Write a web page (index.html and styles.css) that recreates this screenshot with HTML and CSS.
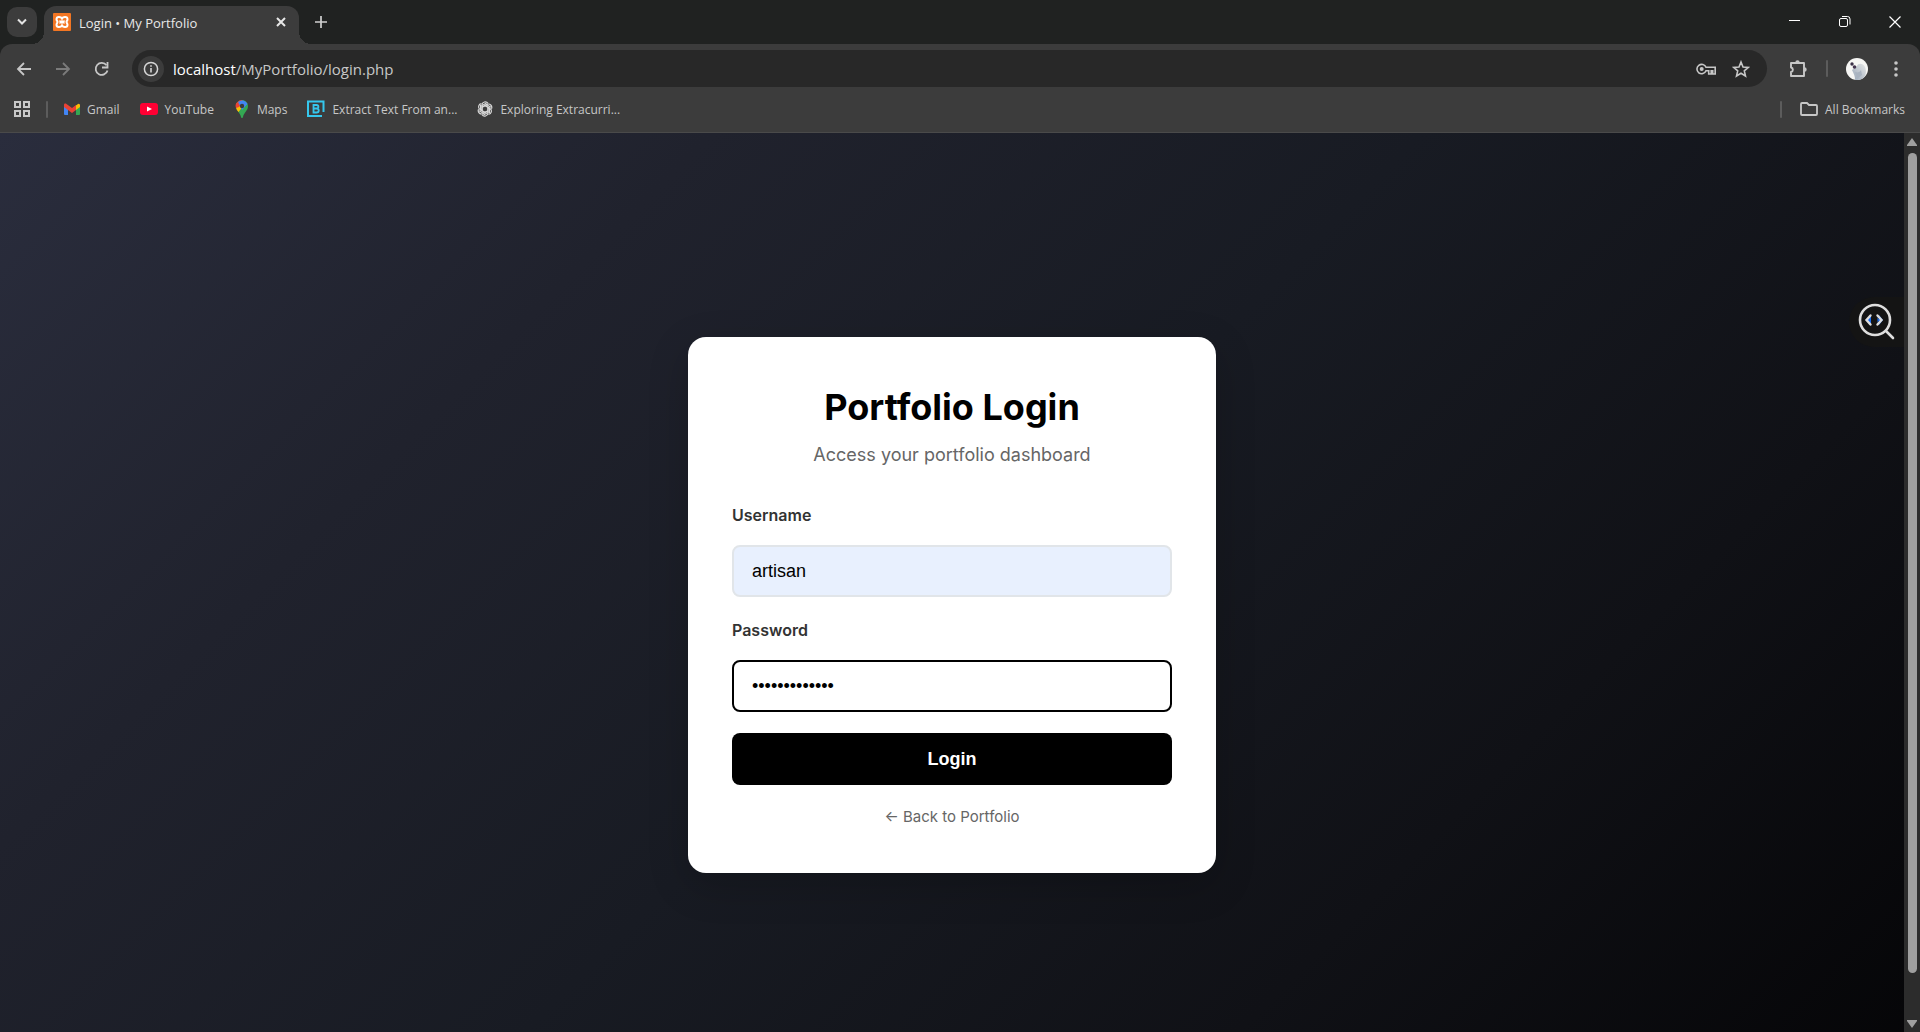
FILE: index.html
```html
<!DOCTYPE html>
<html lang="en">
<head>
<meta charset="utf-8">
<title>Login • My Portfolio</title>
<link rel="stylesheet" href="styles.css">
</head>
<body>
<header class="browser">
  <div class="tabstrip">
    <button class="tab-search" aria-label="Search tabs"><svg width="12" height="12" viewBox="0 0 12 12"><path d="M2 3.500 6 7.500 10 3.500" fill="none" stroke="#e3e3e3" stroke-width="2"/></svg></button>
    <div class="tab">
      <svg width="18" height="18" viewBox="0 0 18 18"><rect width="18" height="18" rx="1" fill="#f37623"/><path d="M9 5.500C8 3.500 3.500 3 3.500 6.200c0 1.500 1 1.800 1 2.800s-1 1.300-1 2.800C3.500 15 8 14.500 9 12.500c1 2 5.500 2.500 5.500-.7 0-1.500-1-1.800-1-2.800s1-1.300 1-2.800C14.500 3 10 3.500 9 5.500zM7 7.500C7 9 11 9 11 7.500M7 10.500C7 9 11 9 11 10.500" fill="none" stroke="#fff" stroke-width="2"/></svg>
      <span class="tab-title">Login • My Portfolio</span>
      <button class="icon-btn" aria-label="Close tab"><svg width="10" height="10" viewBox="0 0 10 10"><path d="m1 1 8 8M9 1 1 9" stroke="#e8e8e8" stroke-width="2"/></svg></button>
    </div>
    <button class="icon-btn new-tab" aria-label="New tab"><svg width="12" height="12" viewBox="0 0 12 12"><path d="M6 0v12M0 6h12" stroke="#d0d0d0" stroke-width="1.700"/></svg></button>
    <div class="window-controls">
      <button class="icon-btn" aria-label="Minimize"><svg width="12" height="12" viewBox="0 0 12 12"><path d="M0 4.500h11" stroke="#fff"/></svg></button>
      <button class="icon-btn" aria-label="Restore"><svg width="12" height="12" viewBox="0 0 12 12"><g fill="none" stroke="#fff"><rect x=".5" y="2.500" width="8" height="8" rx="1.500"/><path d="M3 .5h5.500a2.500 2.500 0 0 1 2.500 2.500v5.500"/></g></svg></button>
      <button class="icon-btn" aria-label="Close"><svg width="12" height="12" viewBox="0 0 12 12"><path d="m.5.5 11 11M11.500.5l-11 11" stroke="#fff" stroke-width="1.200"/></svg></button>
    </div>
  </div>
  <div class="toolbar">
    <nav class="nav-buttons">
      <button class="icon-btn" aria-label="Back"><svg width="16" height="16" viewBox="0 0 16 16"><path d="M15 8H2M8 2 2 8l6 6" fill="none" stroke="#c7c7c7" stroke-width="1.800"/></svg></button>
      <button class="icon-btn" aria-label="Forward"><svg width="16" height="16" viewBox="0 0 16 16"><path d="M1 8h13M8 2l6 6-6 6" fill="none" stroke="#7b7b7b" stroke-width="1.800"/></svg></button>
      <button class="icon-btn" aria-label="Reload"><svg width="16" height="16" viewBox="0 0 16 16"><path d="M12.500 4.300A6 6 0 1 0 13.500 9.500" fill="none" stroke="#c7c7c7" stroke-width="1.800"/><path d="M13.500 1v5.500H8" fill="none" stroke="#c7c7c7" stroke-width="1.800"/></svg></button>
    </nav>
    <div class="omnibox">
      <button class="site-info" aria-label="Site information"><svg width="16" height="16" viewBox="0 0 16 16"><circle cx="8" cy="8" r="6.600" fill="none" stroke="#d6d6d6" stroke-width="1.500"/><path d="M8 7v4.500M8 4.200v1.600" stroke="#d6d6d6" stroke-width="1.600"/></svg></button>
      <div class="url"><span class="host">localhost</span>/MyPortfolio/login.php</div>
      <button class="icon-btn" aria-label="Passwords"><svg width="20" height="14" viewBox="0 0 20 14"><path d="M10 5.300h9.200V12h-2.500V8.800h-1.500V12h-2.500V8.800H10A4.700 4.700 0 1 1 10 5.300z" fill="none" stroke="#c7c7c7" stroke-width="1.600"/><circle cx="5.700" cy="7" r="2" fill="#c7c7c7"/></svg></button>
      <button class="icon-btn" aria-label="Bookmark this tab"><svg width="18" height="18" viewBox="0 0 18 18"><path d="m9 2 2 5 5.300.4-4 3.500 1.200 5.100L9 13.300 4.500 16l1.200-5.100-4-3.500L7 7z" fill="none" stroke="#c7c7c7" stroke-width="1.600"/></svg></button>
    </div>
    <div class="toolbar-actions">
      <button class="icon-btn" aria-label="Extensions"><svg width="20" height="20" viewBox="0 0 20 20"><path d="M3 4h13v13H3v-4c2.500-.5 2.500-4 0-4.500z" fill="none" stroke="#c7c7c7" stroke-width="1.900" stroke-linejoin="round"/><path d="M7.300 3.500a2.200 2.200 0 0 1 4.400 0zM16.500 8.300a2.200 2.200 0 0 1 0 4.400z" fill="#c7c7c7"/></svg></button>
      <span class="divider"></span>
      <button class="icon-btn" aria-label="Profile"><svg width="22" height="22" viewBox="0 0 22 22"><defs><clipPath id="avatar"><circle cx="11" cy="11" r="11"/></clipPath><linearGradient id="fur" x1="1" y1="0" x2="0" y2="1"><stop offset="0" stop-color="#e6e7e6"/><stop offset="1" stop-color="#98a6b8"/></linearGradient></defs><g clip-path="url(#avatar)"><path d="M0 0h22v22H0z" fill="#f6f6f4"/><path d="M6 12c2 4 3 6 3 10h6c5-3 6-8 4-13-2-4-7-4-8-1z" fill="url(#fur)"/><path d="M9 14c3 1 5 0 6-2l1 5-5 4z" fill="#a9b3c0"/><circle cx="6" cy="6" r="1.700" fill="#3c3148"/><circle cx="8.500" cy="9" r="1.800" fill="#443550"/></g></svg></button>
      <button class="icon-btn menu" aria-label="Menu"><svg width="4" height="16" viewBox="0 0 4 16"><g fill="#c7c7c7"><circle cx="2" cy="2" r="1.800"/><circle cx="2" cy="8" r="1.800"/><circle cx="2" cy="14" r="1.800"/></g></svg></button>
    </div>
  </div>
  <nav class="bookmarks">
    <button class="icon-btn" aria-label="Apps"><svg width="16" height="16" viewBox="0 0 16 16"><path d="M1 1h5v5H1zM10 1h5v5h-5zM1 10h5v5H1zM10 10h5v5h-5z" fill="none" stroke="#c7c7c7" stroke-width="2"/></svg></button>
    <span class="divider"></span>
    <a class="bookmark" href="#"><svg width="16" height="16" viewBox="0 0 16 16"><path d="M0 4h4v10H1a1 1 0 0 1-1-1z" fill="#4285f4"/><path d="M12 4h4v9a1 1 0 0 1-1 1h-3z" fill="#34a853"/><path d="M12 4.500 14 3a1.300 1.300 0 0 1 2 1v2l-4 3z" fill="#fbbc04"/><path d="M0 6V4c0-1.500 1.500-1.700 2.500-1L8 7l4-3v5l-4 3z" fill="#ea4335"/></svg>Gmail</a>
    <a class="bookmark" href="#"><svg width="18" height="14" viewBox="0 0 18 14"><rect y="1" width="18" height="12" rx="3" fill="#ff0033"/><path d="m7 4.500 5 2.500-5 2.500z" fill="#fff"/></svg>YouTube</a>
    <a class="bookmark" href="#"><svg width="16" height="18" viewBox="-1 0 16 18"><path d="M1 6a6 6 0 0 1 12 0c0 5-4 6-5 11a1 1 0 0 1-2 0C5 12 1 11 1 6z" fill="#34a853"/><path d="M1 6c0 3 1 4 2.500 6L9 5 2 2.500A6 6 0 0 0 1 6z" fill="#fbbc04"/><path d="M2.300 2.300A6 6 0 0 1 7 0l1 2-4 5-3 1a5 5 0 0 1 1.300-5.700z" fill="#ea4335"/><path d="M3 2a6 6 0 0 1 9.500 2L7 10 5 6z" fill="#4285f4"/><circle cx="7" cy="6" r="2.200" fill="#3c3c3c"/></svg>Maps</a>
    <a class="bookmark" href="#"><svg width="18" height="18" viewBox="0 0 18 18"><path d="M15 16H1V1.500h15.500V12" fill="none" stroke="#35c7ed" stroke-width="2"/><path d="M6.500 5h3c2.500 0 2.500 3.500 0 3.500 3 0 3 4 0 4h-3zM6.500 8.500h3" fill="none" stroke="#35c7ed" stroke-width="1.800"/></svg>Extract Text From an...</a>
    <a class="bookmark" href="#"><svg width="16" height="16" viewBox="0 0 16 16"><g fill="none" stroke="#d7d7d7" stroke-width="1.200"><path id="petal" d="M5 9.700V4A3.300 3.300 0 0 1 11 2.300M5 6.300l4.500-2.600L14 6.300"/><use href="#petal" transform="rotate(60 8 8)"/><use href="#petal" transform="rotate(120 8 8)"/><use href="#petal" transform="rotate(180 8 8)"/><use href="#petal" transform="rotate(240 8 8)"/><use href="#petal" transform="rotate(300 8 8)"/></g></svg>Exploring Extracurri...</a>
    <div class="all-bookmarks">
      <span class="divider"></span>
      <a class="bookmark" href="#"><svg width="18" height="14" viewBox="0 0 18 14"><path d="M2 1h5l2 2h7q1 0 1 1v8q0 1-1 1H2q-1 0-1-1V2q0-1 1-1z" fill="none" stroke="#c7c7c7" stroke-width="1.800"/></svg>All Bookmarks</a>
    </div>
  </nav>
</header>
<div class="viewport">
  <main class="page">
    <form class="card">
      <h1>Portfolio Login</h1>
      <p class="subtitle">Access your portfolio dashboard</p>
      <label for="username">Username</label>
      <input class="autofilled" id="username" type="text" value="artisan">
      <label for="password">Password</label>
      <input class="focused" id="password" type="password" value="portfolio1234">
      <button class="submit" type="button">Login</button>
      <a class="back" href="#">← Back to Portfolio</a>
    </form>
  </main>
  <button class="inspector" aria-label="Inspect code"><svg width="38" height="38" viewBox="0 0 38 38"><g fill="none" stroke="#dedede" stroke-width="2.600" stroke-linecap="round"><circle cx="17" cy="17" r="15"/><path d="m28 28 7 7"/></g><path d="m13 12-4 5 4 5zM21 12l4 5-4 5z" fill="#1a6cf0"/><path d="m12.500 12.500-4 4.500 4 4.500M19.500 12.500l4 4.500-4 4.500" fill="none" stroke="#dedede" stroke-width="2.400" stroke-linecap="round"/><path d="M13 14.500v5l-2-2.500zM19.500 14.500v5l2-2.500z" fill="#1a6cf0"/></svg></button>
  <div class="scrollbar">
    <svg width="10" height="8" viewBox="0 0 10 8"><path d="M5 0 10 7v1H0V7z" fill="#9f9f9f"/></svg>
    <div class="thumb"></div>
    <svg width="10" height="8" viewBox="0 0 10 8"><path d="M5 8 10 1V0H0v1z" fill="#9f9f9f"/></svg>
  </div>
</div>
</body>
</html>
```
FILE: styles.css
```css
* { box-sizing: border-box; }

body {
  margin: 0;
  height: 100vh;
  display: flex;
  flex-direction: column;
  overflow: hidden;
  font-family: "Open Sans", "Noto Sans", sans-serif;
  background: #202221;
}

button { border: 0; padding: 0; background: none; font: inherit; }
a { text-decoration: none; }
svg { display: block; flex: none; }

.icon-btn { display: flex; align-items: center; justify-content: center; flex: none; }

/* Browser frame */
.browser { flex: none; color: #c7c7c7; font-size: 12px; }

.tabstrip { display: flex; height: 44px; padding-left: 7px; align-items: center; }
.tab-search {
  display: flex; align-items: center; justify-content: center;
  width: 30px; height: 30px; border-radius: 10px; background: #3c3c3c;
}
.tab {
  position: relative;
  display: flex; align-items: center; gap: 8px;
  align-self: flex-end;
  width: 255px; height: 38px;
  margin-left: 7px; padding: 0 13px 6px 9px;
  border-radius: 12px 12px 0 0;
  background: #3c3c3c; color: #e8e8e8;
}
.tab::before, .tab::after {
  content: ""; position: absolute; bottom: 0; width: 12px; height: 12px;
}
.tab::before { right: 100%; background: radial-gradient(circle at 0 0, transparent 12px, #3c3c3c 12px); }
.tab::after { left: 100%; background: radial-gradient(circle at 100% 0, transparent 12px, #3c3c3c 12px); }
.tab-title { flex: 1; padding-top: 2px; font-size: 13px; }
.new-tab { margin-left: 16px; }
.window-controls { display: flex; gap: 38px; margin-left: auto; padding-right: 19px; }

.toolbar {
  display: flex; align-items: center;
  height: 51px; padding: 0 22px 2px 16px;
  border-radius: 12px 12px 0 0; background: #3c3c3c;
}
.nav-buttons { display: flex; gap: 23px; }
.omnibox {
  display: flex; flex: 1; align-items: center; gap: 16px;
  height: 37px; margin-left: 22px; padding: 0 17px 0 6px;
  border-radius: 19px; background: #282828;
}
.site-info {
  display: flex; align-items: center; justify-content: center;
  width: 26px; height: 26px; border-radius: 50%; background: #3c3c3c;
}
.url { flex: 1; margin-left: -7px; font-size: 15px; }
.host { color: #fff; }
.toolbar-actions { display: flex; align-items: center; gap: 18px; margin-left: 21px; }
.menu { margin-left: 8px; }
.divider { width: 2px; height: 17px; background: #5c5c5c; border-radius: 1px; }

.bookmarks {
  display: flex; align-items: center; gap: 16px;
  height: 38px; padding: 0 15px 9px 14px;
  border-bottom: 1px solid #4a4a4a; background: #3c3c3c;
}
.bookmark { display: flex; align-items: center; gap: 7px; color: #c7c7c7; }
.bookmark + .bookmark { margin-left: 4px; }
.all-bookmarks { display: flex; align-items: center; gap: 18px; margin-left: auto; }

/* Page */
.viewport { position: relative; display: flex; flex: 1; min-height: 0; overflow: hidden; }
.page {
  display: flex; flex: 1; align-items: center; justify-content: center;
  height: calc(100% + 45px);
  background: linear-gradient(135deg, #2a2d3d 0%, #20222d 25%, #181b23 50%, #101116 75%, #050507 100%);
  font-family: Inter, sans-serif;
}
.card {
  display: flex; flex-direction: column;
  width: 528px; padding: 44px;
  border-radius: 18px; background: #fff;
  box-shadow: 0 12px 40px rgba(0, 0, 0, .2);
}
.card h1 {
  margin: 0 0 8px; color: #000; text-align: center;
  font-size: 36px; line-height: 52px; font-weight: 700;
}
.subtitle { margin: 0 0 32px; color: #666; text-align: center; font-size: 18px; line-height: 28px; }
.card label { margin-bottom: 16px; color: #333; font-size: 16px; line-height: 28px; font-weight: 600; }
.card input {
  width: 100%; height: 52px; margin-bottom: 19px; padding: 0 18px;
  border: 2px solid #e1e5e9; border-radius: 8px; outline: 0;
  background: #fff; color: #000;
  font-family: "Liberation Sans", sans-serif; font-size: 18px;
}
.card .autofilled { background: #e8f0fe; }
.card .focused { border-color: #000; }
.submit {
  height: 52px; margin: 2px 0 20px; border-radius: 8px;
  background: #000; color: #fff;
  font-family: "Liberation Sans", sans-serif; font-size: 18px; font-weight: 600;
}
.back { color: #666; text-align: center; font-size: 15px; line-height: 24px; }

.inspector {
  position: absolute; top: 164px; right: 16px;
  display: flex; align-items: center; padding-left: 9px;
  width: 55px; height: 50px;
  border-radius: 25px 0 0 25px; background: #141414;
}

.scrollbar {
  display: flex; flex-direction: column; align-items: center; gap: 7px;
  width: 16px; padding: 5px 0 4px; background: #2c2c2c;
}
.thumb { width: 9px; flex: 1; margin-bottom: 40px; border-radius: 5px; background: #9f9f9f; }
```
